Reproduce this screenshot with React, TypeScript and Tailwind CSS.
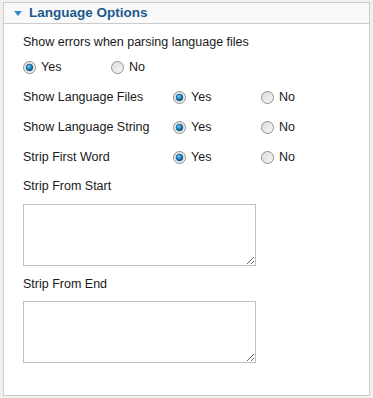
import React from "react";

const Radio = ({ checked }: { checked?: boolean }) => (
    <svg width="13" height="13" viewBox="0 0 13 13" className="shrink-0">
        <defs>
            <linearGradient id={checked ? "rgc" : "rgu"} x1="0" y1="0" x2="1" y2="1">
                <stop offset="0" stopColor="#d8d8d8" />
                <stop offset="1" stopColor="#fbfbfb" />
            </linearGradient>
            <radialGradient id="dot" cx="0.4" cy="0.35" r="0.7">
                <stop offset="0" stopColor="#7fd0f5" />
                <stop offset="0.5" stopColor="#1a86c6" />
                <stop offset="1" stopColor="#0b3f6e" />
            </radialGradient>
        </defs>
        <circle cx="6.5" cy="6.5" r="6" fill={`url(#${checked ? "rgc" : "rgu"})`} stroke="#8e8f8f" strokeWidth="1" />
        <circle cx="6.5" cy="6.5" r="4.6" fill="none" stroke="#e6e6e6" strokeWidth="0.8" />
        {checked && <circle cx="6.5" cy="6.5" r="3.4" fill="url(#dot)" stroke="#1d4f7a" strokeWidth="0.6" />}
    </svg>
);

const Choice = ({ label, checked }: { label: string; checked?: boolean }) => (
    <div className="flex items-center gap-[5px] w-[88px]">
        <Radio checked={checked} />
        <span>{label}</span>
    </div>
);

const YesNo = () => (
    <div className="flex items-center">
        <Choice label="Yes" checked />
        <Choice label="No" />
    </div>
);

const Row = ({ label }: { label: string }) => (
    <div className="flex items-center h-4">
        <span className="w-[150px]">{label}</span>
        <YesNo />
    </div>
);

export default function App() {
    return (
        <div className="w-[373px] h-[398px] bg-[#f0f0f0] pt-[2px] pl-[3px]" style={{ fontFamily: '"Liberation Sans", Arial, sans-serif' }}>
            <div className="w-[367px] h-[394px] bg-white border border-[#cccccc]">
                <div className="h-[21px] bg-[#f9f9f9] border-b border-[#cccccc] flex items-center">
                    <svg width="8" height="5" viewBox="0 0 8 5" className="ml-[10px] mt-[1px]">
                        <path d="M0 0H8L4 5Z" fill="#2a8ccb" />
                    </svg>
                    <h2 className="ml-[7px] text-[13.5px] font-bold text-[#1d5a8c] leading-none">Language Options</h2>
                </div>
                <div className="pl-[19px] pt-[10px] text-[12.5px] leading-4 text-[#1a1a1a]">
                    <div className="h-4">Show errors when parsing language files</div>
                    <div className="mt-[9px] h-4">
                        <YesNo />
                    </div>
                    <div className="mt-[14px] flex flex-col gap-[14px]">
                        <Row label="Show Language Files" />
                        <Row label="Show Language String" />
                        <Row label="Strip First Word" />
                    </div>
                    <div className="mt-[13px] h-4">Strip From Start</div>
                    <textarea className="mt-[10px] block w-[233px] h-[62px] border border-[#c0c0c0] bg-white outline-none" />
                    <div className="mt-[10px] h-4">Strip From End</div>
                    <textarea className="mt-[9px] block w-[233px] h-[62px] border border-[#c0c0c0] bg-white outline-none" />
                </div>
            </div>
        </div>
    );
}
